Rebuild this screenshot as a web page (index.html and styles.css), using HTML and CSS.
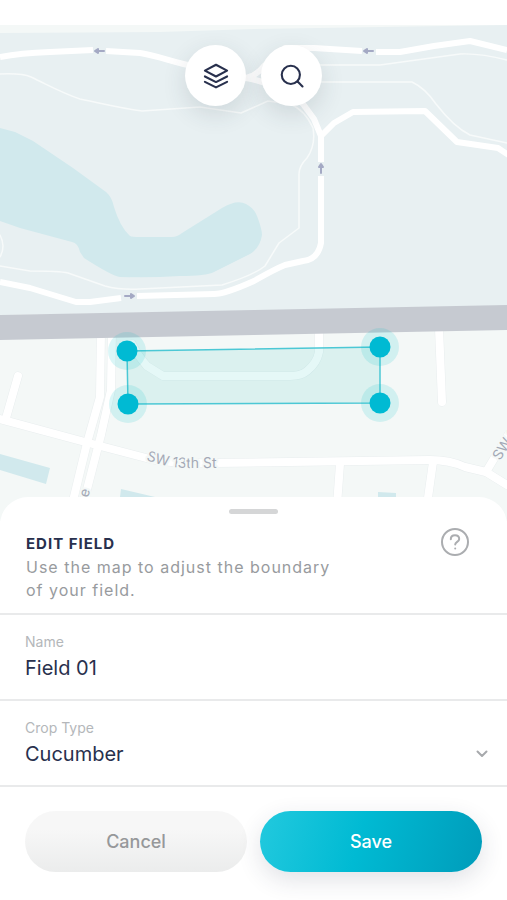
FILE: index.html
```html
<!DOCTYPE html>
<html lang="en">
<head>
  <meta charset="UTF-8">
  <meta name="viewport" content="width=device-width, initial-scale=1.0">
  <title>Edit Field</title>
  <link rel="stylesheet" href="styles.css">
</head>
<body>

<!-- Map -->
<div class="map">
  <svg class="map-canvas" viewBox="0 25 507 496" role="img" aria-label="Map with field boundary">
    <rect class="land" x="0" y="25" width="507" height="496"/>
    <path class="park" d="M0 33 L160 32 L254 29 L507 25 V306 L254 311 L0 315 Z"/>

    <!-- Water -->
    <path class="water" d="M0 128 L15 132 L33 141 L73 168 L106 192 Q112 197 114 207 Q120 227 130 236 Q132 237 140 237 H172 Q177 237 182 233 L222 208 Q237 199 246 204 Q254 208 257 216 Q262 229 262 235 Q260 248 250 254 L214 272 Q206 276 180 276 Q150 278 120 277 Q112 276 84 258 L80 252 Q78 243 72 242 L20 228 L0 221 Z"/>
    <path class="water" d="M0 454 L50 468 L46 484 L0 470 Z"/>
    <path class="water" d="M121 489 L155 497 V505 H119 Z"/>
    <path class="water" d="M378 492 L396 493 V505 H378 Z"/>

    <!-- Trails -->
    <g class="trail">
      <path d="M0 74 Q22 73 31 77 C50 86 62 93 80 99 C100 103 120 108 142 111 L200 107 L241 113 L268 101 L290 104 Q305 110 313 128 Q316 145 307 158 Q299 166 299 174 V228 L279 243 L265 266 Q254 275 222 285 L140 289 Q120 290 105 286 L68 273 Q60 271 30 271 L0 266"/>
      <path d="M320 65 H380 L460 54 Q480 53 507 60"/>
      <path d="M320 82 H412 Q425 88 436 104 C450 122 460 130 470 135 L507 143"/>
      <path d="M0 235 Q6 246 0 257"/>
    </g>

    <!-- Park roads -->
    <g class="road">
      <path d="M0 57 Q20 53 50 52 L93 50 M106 51 L140 53 C160 56 180 65 195 66 L220 75 L246 78 Q256 76 264 66 L285 48 H314 L362 51 M376 52 H400 L434 46 L470 41 L507 50"/>
      <path d="M246 78 Q280 84 303 104 L314 119 L321 136 V162 M321 176 V243 C319 254 313 260 303 261 L285 265 Q275 269 254 281 Q225 294 214 294 L137 296 M121 298 L90 302 H76 L30 288 L0 282"/>
      <path d="M321 136 L334 123 L353 112 L425 111 L457 142 L498 148 L510 156"/>
    </g>

    <!-- Streets -->
    <g class="street-edge">
      <path d="M101 330 L100 397 L87 443 L72 505"/>
      <path d="M112 330 L111 390 L101 435 L83 505"/>
      <path d="M0 419 L85 442 L150 459 Q175 464 215 463 L430 460 Q450 460 465 467 L486 472 L507 485"/>
      <path d="M18 376 L6 418 M340 464 L337 505 M433 462 L427 505 M439 328 L442 402 M486 472 L510 432"/>
      <path d="M319 330 V352 Q317 363 307 371 Q301 376 290 376 H163 L147 366 Q138 356 132 344"/>
    </g>
    <g class="street">
      <path d="M101 330 L100 397 L87 443 L72 505"/>
      <path d="M112 330 L111 390 L101 435 L83 505"/>
      <path d="M0 419 L85 442 L150 459 Q175 464 215 463 L430 460 Q450 460 465 467 L486 472 L507 485"/>
      <path d="M18 376 L6 418 M340 464 L337 505 M433 462 L427 505 M439 328 L442 402 M486 472 L510 432"/>
      <path d="M319 330 V352 Q317 363 307 371 Q301 376 290 376 H163 L147 366 Q138 356 132 344"/>
    </g>
    <path class="highway" d="M0 315 L254 310 L507 305 V330 L254 335 L0 340 Z"/>

    <!-- One-way arrows -->
    <g class="arrow">
      <path d="M104 51 H96 M98 49 L95 51 L98 53 Z"/>
      <path d="M373 51 H365 M367 49 L364 51 L367 53 Z"/>
      <path d="M125 296 H133 M131 294 L134 296 L131 298 Z"/>
      <path d="M321 173 V165 M319 167 L321 164 L323 167 Z"/>
    </g>

    <!-- Street names -->
    <path id="street-13" class="label-path" d="M146 460 Q168 468 190 468 H230"/>
    <text class="street-name"><textPath href="#street-13">SW 13th St</textPath></text>
    <text class="street-name" transform="translate(500 461) rotate(-58)">SW 1</text>
    <text class="street-name" transform="translate(88 498) rotate(-74)">e</text>

    <!-- Field boundary -->
    <path class="field-area" d="M127 351 L380 347 V403 L128 404 Z"/>
    <g class="field-halo">
      <circle cx="127" cy="351" r="19"/>
      <circle cx="380" cy="347" r="19"/>
      <circle cx="380" cy="403" r="19"/>
      <circle cx="128" cy="404" r="19"/>
    </g>
    <g class="field-point">
      <circle cx="127" cy="351" r="10.5"/>
      <circle cx="380" cy="347" r="10.5"/>
      <circle cx="380" cy="403" r="10.5"/>
      <circle cx="128" cy="404" r="10.5"/>
    </g>
  </svg>

  <div class="map-tools">
    <button class="tool" type="button" aria-label="Layers">
      <svg viewBox="0 0 24 24" width="28" height="28">
        <path d="M12 2.4 L21.5 7.4 L12 12.4 L2.5 7.4 Z"/>
        <path d="M2.5 12.4 L12 17.2 L21.5 12.4"/>
        <path d="M2.5 17 L12 21.8 L21.5 17"/>
      </svg>
    </button>
    <button class="tool" type="button" aria-label="Search">
      <svg viewBox="0 0 24 24" width="28" height="28">
        <circle cx="11" cy="11" r="7.8"/>
        <path d="M16.8 16.8 L21 21"/>
      </svg>
    </button>
  </div>
</div>

<!-- Bottom sheet -->
<form class="sheet">
  <div class="grabber"></div>

  <div class="sheet-header">
    <div class="intro">
      <h1>EDIT FIELD</h1>
      <p>Use the map to adjust the boundary of your field.</p>
    </div>
    <button class="help" type="button" aria-label="Help">
      <svg viewBox="0 0 28 28" width="28" height="28">
        <circle cx="14" cy="14" r="13"/>
        <path d="M9.8 11.2 C9.8 8.8 11.6 7.3 14 7.3 C16.4 7.3 18.2 8.8 18.2 11 C18.2 13.8 14.2 14 14.2 16.6"/>
        <path d="M14.2 20.4 V20.6"/>
      </svg>
    </button>
  </div>

  <div class="field">
    <label for="name">Name</label>
    <input id="name" type="text" value="Field 01">
  </div>

  <div class="field">
    <label for="crop">Crop Type</label>
    <select id="crop">
      <option>Cucumber</option>
      <option>Tomato</option>
      <option>Lettuce</option>
    </select>
    <svg class="chevron" viewBox="0 0 12 8" width="12" height="8">
      <path d="M1.5 1.5 L6 6 L10.5 1.5"/>
    </svg>
  </div>

  <div class="buttons">
    <button class="cancel" type="button">Cancel</button>
    <button class="save" type="submit">Save</button>
  </div>
</form>

</body>
</html>
```

FILE: styles.css
```css
/* General Reset */
* {
  margin: 0;
  padding: 0;
  box-sizing: border-box;
  font-family: Inter, "Open Sans", sans-serif;
}

body {
  background-color: #fff;
  color: #28304d;
  padding-top: 25px;
}

button {
  border: none;
  cursor: pointer;
}

svg {
  display: block;
  fill: none;
  stroke-linecap: round;
  stroke-linejoin: round;
}

/* Map */
.map {
  position: relative;
}

.map-canvas {
  width: 100%;
  height: auto;
}

.land {
  fill: #f4f8f7;
}

.park {
  fill: #e8f0f2;
}

.water {
  fill: #d1e9ed;
}

.highway {
  fill: #c6cad1;
}

.trail {
  stroke: #f7fafa;
  stroke-width: 1.5;
}

.road {
  stroke: #fff;
  stroke-width: 6;
  stroke-linecap: butt;
}

.street-edge {
  stroke: #e9eeef;
  stroke-width: 9;
}

.street {
  stroke: #fff;
  stroke-width: 8;
}

.arrow {
  fill: #a4a9c4;
  stroke: #a4a9c4;
  stroke-width: 2;
}

.label-path {
  stroke: none;
}

.street-name {
  font-size: 14px;
  fill: #a3a8b5;
  stroke: #f4f8f7;
  stroke-width: 4px;
  paint-order: stroke;
}

.field-area {
  fill: rgba(0, 188, 180, 0.1);
  stroke: #4cc8d5;
  stroke-width: 1.5;
}

.field-halo {
  fill: rgba(0, 188, 200, 0.14);
}

.field-point {
  fill: #00bad3;
}

.map-tools {
  position: absolute;
  top: 20px;
  left: 0;
  right: 0;
  display: flex;
  justify-content: center;
  gap: 15px;
}

.tool {
  width: 61px;
  height: 61px;
  border-radius: 50%;
  background: #fff;
  box-shadow: 0 8px 24px rgba(40, 60, 70, 0.14);
  display: flex;
  align-items: center;
  justify-content: center;
}

.tool svg {
  stroke: #28304d;
  stroke-width: 1.8;
}

/* Bottom sheet */
.sheet {
  position: relative;
  margin-top: -24px;
  background: #fff;
  border-radius: 28px 28px 0 0;
  padding-top: 12px;
}

.grabber {
  width: 49px;
  height: 5px;
  margin: 0 auto;
  border-radius: 3px;
  background: #d5d6d7;
}

.sheet-header {
  display: flex;
  justify-content: space-between;
  align-items: flex-start;
  padding: 14px 38px 11px 26px;
}

.intro {
  max-width: 320px;
  padding-top: 4px;
}

.intro h1 {
  font-size: 15px;
  line-height: 24px;
  font-weight: 700;
  letter-spacing: 1px;
}

.intro p {
  font-size: 16px;
  line-height: 23px;
  letter-spacing: 1px;
  color: #989b9e;
}

.help {
  background: none;
}

.help svg {
  stroke: #abadb0;
  stroke-width: 2;
}

.field {
  position: relative;
  display: flex;
  flex-direction: column;
  border-top: 2px solid #e9eaeb;
  padding: 17px 25px 16px;
}

.field label {
  font-size: 14px;
  line-height: 20px;
  color: #b4b7ba;
}

.field input,
.field select {
  width: 100%;
  height: 31px;
  border: none;
  outline: none;
  background: none;
  appearance: none;
  font-size: 20px;
  color: #28304d;
}

.chevron {
  position: absolute;
  right: 19px;
  bottom: 27px;
  stroke: #a7a9ac;
  stroke-width: 2;
  pointer-events: none;
}

/* Buttons */
.buttons {
  display: flex;
  gap: 13px;
  border-top: 2px solid #e9eaeb;
  padding: 24px 25px 29px;
}

.buttons button {
  flex: 1;
  height: 61px;
  border-radius: 31px;
  font-size: 18px;
  font-weight: 500;
}

.buttons .cancel {
  background: linear-gradient(#f7f7f7 30%, #ebecec);
  color: #96989a;
}

.buttons .save {
  background: linear-gradient(105deg, #22c9de, #00bad3 45%, #009cba);
  color: #fff;
  box-shadow: 0 8px 24px rgba(40, 50, 80, 0.14);
}
```
